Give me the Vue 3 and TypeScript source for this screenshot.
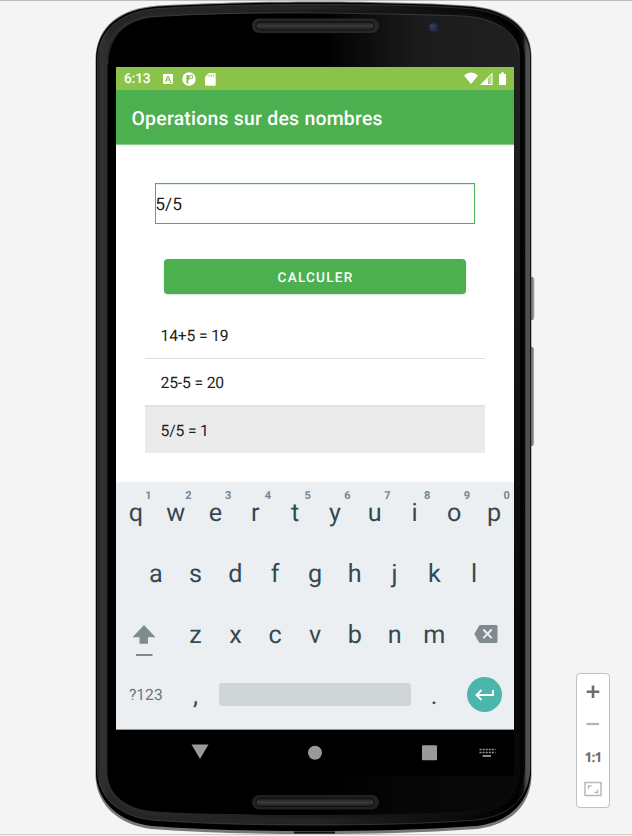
<script setup lang="ts">
interface Key {
  label: string
  hint?: string
}

const topRow: Key[] = 'qwertyuiop'.split('').map((label, i) => ({ label, hint: String((i + 1) % 10) }))
const homeRow: string[] = 'asdfghjkl'.split('')
const bottomRow: string[] = 'zxcvbnm'.split('')
const results: string[] = ['14+5 = 19', '25-5 = 20', '5/5 = 1']
const selected = 2
</script>

<template>
  <main class="stage">
    <svg class="body" viewBox="0 0 632 836" aria-hidden="true">
      <defs>
        <linearGradient id="rim" x1="0" x2="1" y1="0" y2="0">
          <stop offset="0" stop-color="#161616" />
          <stop offset="0.006" stop-color="#303030" />
          <stop offset="0.016" stop-color="#2f2f2f" />
          <stop offset="0.028" stop-color="#252525" />
          <stop offset="0.5" stop-color="#242424" />
          <stop offset="0.97" stop-color="#000" />
          <stop offset="0.984" stop-color="#0c0c0c" />
          <stop offset="0.991" stop-color="#4a4a4a" />
          <stop offset="1" stop-color="#555" />
        </linearGradient>
        <linearGradient id="bevel" x1="0" x2="1" y1="0" y2="0">
          <stop offset="0" stop-color="#2e2e2e" />
          <stop offset="0.5" stop-color="#1b1b1b" />
          <stop offset="0.95" stop-color="#0a0a0a" />
          <stop offset="1" stop-color="#000" />
        </linearGradient>
        <linearGradient id="face" x1="0" x2="1" y1="0" y2="0">
          <stop offset="0" stop-color="#000" />
          <stop offset="0.52" stop-color="#000" />
          <stop offset="0.75" stop-color="#1b1b1b" />
          <stop offset="1" stop-color="#202020" />
        </linearGradient>
        <linearGradient id="fade" x1="0" x2="0" y1="0" y2="1">
          <stop offset="0.1" stop-color="#000" stop-opacity="0" />
          <stop offset="0.8" stop-color="#000" stop-opacity="0.75" />
        </linearGradient>
        <linearGradient id="slot" x1="0" x2="0" y1="0" y2="1">
          <stop offset="0" stop-color="#151515" />
          <stop offset="0.5" stop-color="#3b3b3b" />
          <stop offset="1" stop-color="#1c1c1c" />
        </linearGradient>
        <linearGradient id="side" x1="0" x2="1" y1="0" y2="0">
          <stop offset="0" stop-color="#555" />
          <stop offset="1" stop-color="#bbb" />
        </linearGradient>
      </defs>
      <path d="M0 .5H632" stroke="#bdbdbd" />
      <path d="M0 834.5H632" stroke="#cfcfcf" />
      <path d="M531 277h2l1.500 2v38l-1.500 3h-2zM531 347h2l1 2v94l-1 3h-2z" fill="url(#side)" />
      <path d="M95.500 60C96 26 120 8 158 5.500C220 2.500 270 1.500 314 1.500S425 2.500 467 5.500C506 8 531 25 531.500 56V777C530 808 508 825 477 829C420 833 370 834 314 834S205 833 151 829C120 825 97 806 95.500 777Z" fill="#777" />
      <path d="M96 60C96.500 27 121 9 158 6.500C220 3.500 270 2.500 314 2.500S425 3.500 467 6.500C505 9 530 26 531 56V774C529 804 508 822 477 826C420 830 370 831 314 831S205 830 151 826C120 822 98 803 96 775Z" fill="#000" />
      <path d="M97.500 60C98 29 122 11 158 8.500C220 5 270 4.500 314 4.500S425 5 467 8.500C504 11 529 28 530 56V770C528 800 508 816 477 820C420 824 370 825 314 825S205 824 151 820C120 816 98 799 97.500 770Z" fill="url(#rim)" stroke="#494949" stroke-width=".6" />
      <path d="M103 60C105 32 128 14 165 12C230 9 400 9 460 12C500 15 522 32 525 55V770C523 794 507 809 477 814C420 820 210 820 151 815C125 811 105 796 103 770Z" fill="url(#bevel)" opacity=".8" />
      <path d="M107.500 58C110 34 127 20 151 17C220 12 400 12 463 16C495 18 517 32 520 54V770C519 795 503 807 474 811C410 816 210 816 151 811C126 808 108 795 107.500 772Z" fill="url(#face)" />
      <path d="M107.500 58C110 34 127 20 151 17C220 12 400 12 463 16C495 18 517 32 520 54V770C519 795 503 807 474 811C410 816 210 816 151 811C126 808 108 795 107.500 772Z" fill="url(#fade)" />
      <path d="M107.500 64C109 34 127 20 151 17Q220 12 314 13T463 16C495 18 517 32 519 52" fill="none" stroke="#666" stroke-width=".7" opacity=".6" />
      <rect x="252" y="18.500" width="127" height="14.500" rx="7.200" fill="#272727" />
      <rect x="256" y="21.500" width="118" height="8.500" rx="4" fill="url(#slot)" stroke="#121212" />
      <rect x="252" y="795" width="127" height="14.500" rx="7.200" fill="#212121" />
      <rect x="256" y="798" width="118" height="8.500" rx="4" fill="url(#slot)" stroke="#101010" />
      <circle cx="433.500" cy="27.500" r="5.500" fill="#202434" />
      <circle cx="433" cy="27" r="3.500" fill="#2a3250" />
      <circle cx="432" cy="26" r="1" fill="#4a5680" />
      <path d="M294 832.500h41" stroke="#111" stroke-width="2" />
    </svg>

    <section class="screen">
      <header class="status">
        <span class="clock">6:13</span>
        <svg class="glyph-a" viewBox="0 0 10 10"><rect width="10" height="10" rx="1" fill="#fff" /><path d="M2.700 7.500L4.600 2.400h.8L7.300 7.500M3.500 6h3M7 8.500h2" fill="none" stroke="#8bc34a" stroke-width="1.100" /></svg>
        <svg class="glyph-p" viewBox="0 0 14 14"><circle cx="7" cy="7" r="6.700" fill="#fff" /><path d="M4.300 3V11l2 1.200V8h1V3z" fill="#8bc34a" /><path d="M7.800 3.400h2.800v3H7.800z" fill="#fff" stroke="#8bc34a" stroke-width=".9" /></svg>
        <svg class="glyph-sd" viewBox="0 0 11 13"><path d="M4 0h5.700q1 0 1 1v10.700q0 1-1 1H1q-1 0-1-1V4z" fill="#fff" /><path d="M4.100 1.500v2.400M6.200 1.500v2.400M8.300 1.500v2.400" stroke="#8bc34a" stroke-width=".8" /></svg>
        <svg class="radio" viewBox="0 0 44 14"><path d="M0 3.500Q7-2.500 14 3.500L7 12z" fill="#fff" /><path d="M16 13L28.500.500V13z" fill="#fff" /><path d="M24.200 6.200L27.300 3v9h-3.100z" fill="#8bc34a" /><path d="M26 5v7" stroke="#fff" stroke-width=".8" /><path d="M35 2h2V.500h3V2h2v11h-7z" fill="#fff" /></svg>
      </header>
      <h1 class="appbar">Operations sur des nombres</h1>

      <div class="content">
        <div class="field">5/5</div>
        <button class="compute" type="button">CALCULER</button>
        <ul class="results">
          <li v-for="(result, i) in results" :key="result" :class="{ active: i === selected }">{{ result }}</li>
        </ul>
      </div>

      <div class="keyboard">
        <div class="row">
          <span v-for="key in topRow" :key="key.label" class="key">{{ key.label }}<sup class="hint">{{ key.hint }}</sup></span>
        </div>
        <div class="row">
          <span v-for="key in homeRow" :key="key" class="key">{{ key }}</span>
        </div>
        <div class="row">
          <span class="key wide shift"><svg viewBox="0 0 24 34"><path d="M12 0L23.500 12.300H16v6.500H7.500v-6.500H.500z" fill="#808b90" /><path d="M4 30h16.500" stroke="#808b90" stroke-width="2" /></svg></span>
          <span v-for="key in bottomRow" :key="key" class="key">{{ key }}</span>
          <span class="key wide erase"><svg viewBox="0 0 24 18"><path d="M6.500 0H22q1.500 0 1.500 1.500v15q0 1.500-1.500 1.500H6.500q-1 0-1.500-.8L.300 9 5 .800Q5.500 0 6.500 0z" fill="#808b90" /><path d="M9.300 4.500l8.400 8.600m0-8.600l-8.400 8.600" stroke="#ebeef1" stroke-width="2" /></svg></span>
        </div>
        <div class="row">
          <span class="key symbols">?123</span>
          <span class="key">,</span>
          <span class="space"></span>
          <span class="key dot">.</span>
          <span class="enter"><svg viewBox="0 0 20 12"><path d="M18 1v5H2M6.500 1L1.500 6l5 5" fill="none" stroke="#fff" stroke-width="1.800" /></svg></span>
        </div>
      </div>

      <nav class="nav">
        <svg viewBox="0 1 398 46">
          <path d="M75.500 15.500h17L84 30z" fill="#999" />
          <circle cx="199" cy="23.700" r="7" fill="#999" />
          <rect x="306" y="16.300" width="15" height="15" rx="1" fill="#999" />
          <path d="M363.500 20.500h16M363.500 23.500h16" stroke="#999" stroke-width="1.500" stroke-dasharray="2 1.100" />
          <path d="M366.500 27h8.500" stroke="#999" stroke-width="1.800" />
        </svg>
      </nav>
    </section>

    <aside class="zoombar">
      <svg viewBox="0 0 34 134">
        <path d="M17 12.500v12.500M10.700 18.700h12.600" stroke="#6e6e6e" stroke-width="2.600" />
        <path d="M10.500 51h12.500" stroke="#b5b5b5" stroke-width="2.200" />
        <rect x="9" y="109.500" width="16" height="13" fill="none" stroke="#b8b8b8" stroke-width="1.500" />
        <path d="M12.500 116v-3h3M21.500 116.500v3h-3" fill="none" stroke="#b8b8b8" stroke-width="1.300" />
      </svg>
      <span class="ratio">1:1</span>
    </aside>
  </main>
</template>

<style>
body {
  background: #f4f4f4;
}
</style>

<style scoped>
* {
  box-sizing: border-box;
}
.stage {
  position: relative;
  width: 632px;
  height: 836px;
  padding: 67px 0 0 116px;
  overflow: hidden;
  background: #f4f4f4;
  font-family: Roboto, "Liberation Sans", sans-serif;
  text-rendering: geometricPrecision;
}
.body {
  position: absolute;
  inset: 0;
  width: 632px;
  height: 836px;
}
.screen {
  position: relative;
  display: flex;
  flex-direction: column;
  width: 398px;
  height: 709px;
  background: #fff;
}
.status {
  display: flex;
  align-items: center;
  height: 23px;
  padding: 0 7px 0 8px;
  background: #8bc34a;
  color: #fff;
}
.clock {
  width: 39px;
  font-size: 13.8px;
  font-weight: 500;
  letter-spacing: -0.15px;
  line-height: 24px;
}
.glyph-a {
  width: 10px;
  height: 10px;
  margin-top: 1px;
}
.glyph-p {
  width: 14px;
  height: 14px;
  margin: 1px 0 0 9px;
}
.glyph-sd {
  width: 11px;
  height: 13px;
  margin: 1px 0 0 9px;
}
.radio {
  width: 44px;
  height: 14px;
  margin: 1px -1px 0 auto;
}
.appbar {
  height: 55px;
  margin: 0;
  padding-left: 15.5px;
  border-bottom: 1px solid #8fcb91;
  background: #4caf50;
  box-shadow: 0 1px 2px rgba(0, 0, 0, 0.08);
  color: #fff;
  font-size: 19.4px;
  font-weight: 500;
  letter-spacing: 0.25px;
  line-height: 57px;
}
.content {
  display: flex;
  flex-direction: column;
  height: 338px;
  padding: 38px 29px 0;
}
.field {
  height: 41px;
  margin: 0 10px;
  border: 1px solid #4caf50;
  box-shadow: inset 0 1px #dff1df;
  color: #212121;
  font-size: 17.4px;
  line-height: 43px;
  text-indent: -0.8px;
}
.compute {
  height: 35px;
  margin: 35px 19px 0;
  padding: 1px 0 0 1px;
  border: 0;
  border-radius: 4px;
  background: #4caf50;
  box-shadow: 0 1px 2px rgba(0, 0, 0, 0.15);
  color: #fff;
  font: 500 13.6px/36px Roboto, sans-serif;
  letter-spacing: 1.21px;
  text-rendering: geometricPrecision;
}
.results {
  margin: 17px 0 0;
  padding: 0;
  list-style: none;
}
.results li {
  height: 46px;
  padding-left: 15.5px;
  color: #212121;
  font-size: 15.7px;
  letter-spacing: -0.15px;
  line-height: 47px;
}
.results li:first-child {
  height: 48px;
  border-bottom: 1px solid #dedede;
  line-height: 49px;
}
.results li.active {
  height: 48px;
  border-top: 2px solid #e2e2e2;
  background: #ebebeb;
}
.keyboard {
  height: 247px;
  border-bottom: 1px solid #8f959a;
  background: #ebeff2;
  box-shadow: 0 -2px 0 #f5f5f5;
  color: #37474f;
}
.row {
  display: flex;
  justify-content: center;
  height: 61px;
}
.key {
  position: relative;
  width: 39.8px;
  font-size: 25.2px;
  line-height: 61px;
  text-align: center;
}
.hint {
  position: absolute;
  top: 6px;
  left: 26.5px;
  width: 12px;
  color: #78858b;
  font-size: 11px;
  font-weight: 700;
  line-height: 14px;
}
.wide {
  display: flex;
  width: 59.7px;
}
.shift svg {
  width: 24px;
  height: 34px;
  margin: 20px 0 0 16px;
}
.erase svg {
  width: 24px;
  height: 18px;
  margin: 20px 0 0 20px;
}
.key.symbols {
  width: 59.7px;
  color: #68767c;
  font-size: 15.6px;
  line-height: 58px;
}
.space {
  width: 192px;
  height: 23px;
  margin: 17px 3.500px 0;
  border-radius: 3px;
  background: #d0d5d8;
}
.enter {
  display: flex;
  align-items: center;
  justify-content: center;
  width: 35px;
  height: 35px;
  margin: 11px 12px 0 13px;
  border-radius: 50%;
  background: #4db6ac;
}
.enter svg {
  width: 20px;
  height: 12px;
}
.nav {
  height: 46px;
  background: #000;
}
.nav svg {
  display: block;
  width: 398px;
  height: 46px;
}
.zoombar {
  position: absolute;
  top: 673px;
  left: 576px;
  width: 34px;
  height: 135px;
  border: 1px solid #c0c0c0;
  border-radius: 4px;
  background: #fff;
}
.zoombar svg {
  position: absolute;
  top: -1px;
  left: -1px;
  width: 34px;
  height: 134px;
}
.ratio {
  display: block;
  padding-top: 73px;
  color: #6e6e6e;
  font: 700 13.6px/19px "Open Sans", sans-serif;
  letter-spacing: -0.8px;
  text-align: center;
}
</style>
